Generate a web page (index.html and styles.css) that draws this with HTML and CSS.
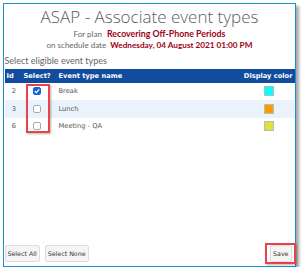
FILE: index.html
```html
<!DOCTYPE html>
<html>
<head>
<meta charset="utf-8">
<link rel="stylesheet" href="styles.css">
</head>
<body>
<div class="dialog">
  <h1 class="title">ASAP - Associate event types</h1>
  <div class="plan">For plan <span class="plan-name">Recovering Off-Phone Periods</span></div>
  <div class="date">on schedule date <span class="date-val">Wednesday, 04 August 2021 01:00 PM</span></div>
  <div class="caption">Select eligible event types</div>
  <div class="grid-wrap">
    <table class="grid">
      <colgroup><col class="w-id"><col class="w-sel"><col><col class="w-color"></colgroup>
      <thead>
        <tr><th class="c-id">Id</th><th class="c-sel">Select?</th><th class="c-name">Event type name</th><th class="c-color">Display color</th></tr>
      </thead>
      <tbody>
        <tr><td class="c-id">2</td><td class="c-sel"><span class="cb checked"><svg viewBox="0 0 8 8" width="8" height="8"><path d="M1.8 4.2 L3.3 5.6 L6.2 2.4" fill="none" stroke="#fff" stroke-width="1.3"/></svg></span></td><td class="c-name">Break</td><td class="c-color"><span class="swatch cyan"></span></td></tr>
        <tr class="alt"><td class="c-id">3</td><td class="c-sel"><span class="cb"></span></td><td class="c-name">Lunch</td><td class="c-color"><span class="swatch orange"></span></td></tr>
        <tr><td class="c-id">6</td><td class="c-sel"><span class="cb"></span></td><td class="c-name">Meeting - QA</td><td class="c-color"><span class="swatch yellow"></span></td></tr>
      </tbody>
    </table>
    <div class="highlight sel-box"></div>
  </div>
  <div class="spacer"></div>
  <div class="footer">
    <div class="left-btns">
      <button class="btn">Select All</button>
      <button class="btn">Select None</button>
    </div>
    <span class="save-box"><button class="btn">Save</button></span>
  </div>
</div>
</body>
</html>
```

FILE: styles.css
```css
* { box-sizing: border-box; }
html, body { margin: 0; padding: 0; background: #fff; }
body { padding: 3px 0 0 3px; }
.dialog {
  width: 293px;
  height: 264px;
  border: 1.5px solid #1b8fd6;
  background: #fff;
  box-shadow: 3px 3px 3px rgba(0,0,0,0.35);
  display: flex;
  flex-direction: column;
  padding: 0 0.5px;
  font-family: "DejaVu Sans", Verdana, sans-serif;
}
.title {
  margin: 1.5px 0 0;
  text-align: center;
  font-family: "Open Sans", "Noto Sans", sans-serif;
  font-weight: 300;
  font-size: 17px;
  line-height: 22px;
  color: #5c5c5c;
}
.plan {
  text-align: center;
  font-family: Lato, "Open Sans", sans-serif;
  font-size: 8px;
  line-height: 11px;
  color: #666;
}
.plan-name { color: #9e0016; font-weight: 700; font-size: 8.8px; margin-left: 3px; }
.date {
  text-align: center;
  font-family: Lato, "Open Sans", sans-serif;
  font-size: 8px;
  line-height: 10px;
  color: #666;
}
.date-val { color: #9e0016; font-weight: 700; font-size: 8.2px; margin-left: 2px; }
.caption {
  font-family: Lato, "Open Sans", sans-serif;
  font-size: 9px;
  line-height: 12px;
  color: #666;
  margin-top: 5px;
}
.grid-wrap { position: relative; margin-top: 2px; }
.grid {
  width: 100%;
  table-layout: fixed;
  border-collapse: collapse;
  font-size: 6.7px;
  color: #555;
}
.w-id { width: 18px; }
.w-sel { width: 30px; }
.w-color { width: 60px; }
.grid th {
  background: #114c9e;
  color: #fff;
  font-weight: 700;
  height: 14px;
  padding: 0;
  text-align: left;
  white-space: nowrap;
}
.grid td { height: 17.5px; padding: 0; white-space: nowrap; }
.grid tr.alt td { background: #eaf2fb; }
th.c-id { padding-left: 2px; }
td.c-id { text-align: center; padding: 0 3px 0 4px; }
th.c-sel { padding-left: 1px; }
td.c-sel { text-align: center; padding: 0 5px 0 3px; }
.c-name { padding-left: 6px !important; }
th.c-color { text-align: right; padding-right: 2px; }
td.c-color { text-align: center; padding-left: 8px; }
.cb {
  display: inline-block;
  width: 8px; height: 8px;
  border: 1px solid #aaa;
  border-radius: 2px;
  background: #fff;
  vertical-align: middle;
  position: relative;
}
.cb.checked { background: #1565d8; border-color: #1565d8; }
.cb svg { position: absolute; left: -1px; top: -1px; }
.swatch {
  display: inline-block;
  width: 10px; height: 10px;
  border: 1px solid #bbb;
  vertical-align: middle;
}
.cyan { background: #00ffff; }
.orange { background: #ff9900; }
.yellow { background: #e0e03a; }
.highlight {
  position: absolute;
  border: 2px solid #e8424a;
  box-shadow: 1px 1px 2px rgba(0,0,0,0.3);
}
.sel-box { left: 21px; top: 15px; width: 24px; height: 49px; }
.spacer { flex: 1; }
.footer {
  display: flex;
  justify-content: space-between;
  align-items: center;
  padding: 0 0 2.5px 0;
}
.left-btns { display: flex; gap: 5px; }
.btn {
  font-family: "DejaVu Sans", sans-serif;
  font-size: 6.3px;
  color: #333;
  background: #f5f5f5;
  border: 1px solid #ddd;
  border-radius: 2px;
  height: 17px;
  padding: 0 2px;
  margin: 0;
}
.save-box {
  display: inline-flex;
  border: 2px solid #e8424a;
  padding: 0 2px 0 3px;
  margin-right: -1px;
  box-shadow: 1px 1px 2px rgba(0,0,0,0.3);
}
```
